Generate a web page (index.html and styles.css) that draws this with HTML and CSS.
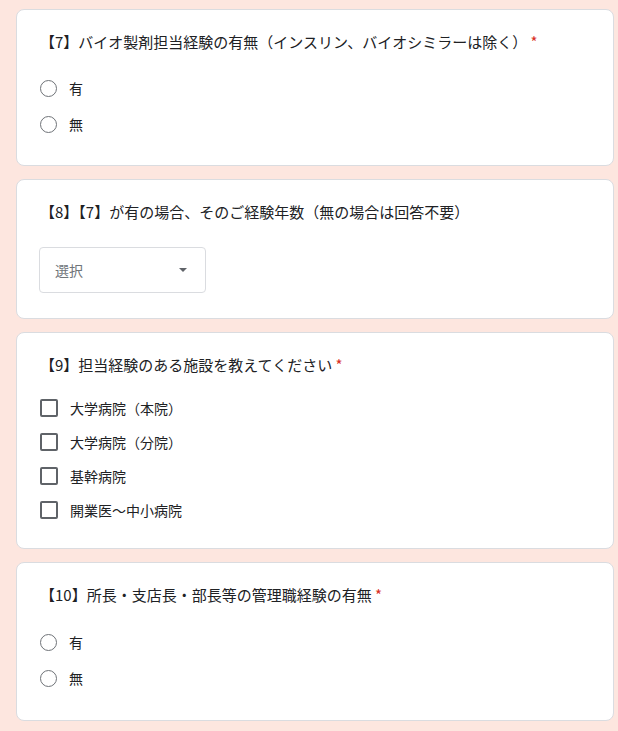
FILE: index.html
```html
<!DOCTYPE html>
<html lang="ja">
<head>
<meta charset="utf-8">
<title>Form</title>
<link rel="stylesheet" href="styles.css">
</head>
<body>
<main class="form">
  <section class="card card-radio">
    <div class="title">【7】バイオ製剤担当経験の有無（インスリン、バイオシミラーは除く） <span class="req">*</span></div>
    <div class="options">
      <label class="opt"><span class="radio"></span><span class="lbl">有</span></label>
      <label class="opt"><span class="radio"></span><span class="lbl">無</span></label>
    </div>
  </section>

  <section class="card card-select">
    <div class="title">【8】【7】が有の場合、そのご経験年数（無の場合は回答不要）</div>
    <div class="select">
      <span class="placeholder">選択</span>
      <span class="arrow"></span>
    </div>
  </section>

  <section class="card card-check">
    <div class="title">【9】担当経験のある施設を教えてください <span class="req">*</span></div>
    <div class="options">
      <label class="opt opt-check"><span class="check"></span><span class="lbl">大学病院（本院）</span></label>
      <label class="opt opt-check"><span class="check"></span><span class="lbl">大学病院（分院）</span></label>
      <label class="opt opt-check"><span class="check"></span><span class="lbl">基幹病院</span></label>
      <label class="opt opt-check"><span class="check"></span><span class="lbl">開業医～中小病院</span></label>
    </div>
  </section>

  <section class="card card-radio card-last">
    <div class="title">【10】所長・支店長・部長等の管理職経験の有無 <span class="req">*</span></div>
    <div class="options">
      <label class="opt"><span class="radio"></span><span class="lbl">有</span></label>
      <label class="opt"><span class="radio"></span><span class="lbl">無</span></label>
    </div>
  </section>
</main>
</body>
</html>
```

FILE: styles.css
```css
html, body {
  margin: 0;
  padding: 0;
}

body {
  background: #fde6df;
  font-family: "Noto Sans CJK JP", "Noto Sans", Roboto, sans-serif;
  color: #202124;
}

.form {
  width: 598px;
  margin: 9px 0 0 16px;
  display: flex;
  flex-direction: column;
  gap: 13px;
  padding-bottom: 10px;
}

.card {
  background: #ffffff;
  border: 1px solid #dadce0;
  border-radius: 8px;
  padding: 21px 23px 23px;
}

.title {
  font-size: 15px;
  line-height: 22px;
}

.req {
  color: #d93025;
}

.options {
  display: flex;
  flex-direction: column;
}

.card-radio .options {
  margin-top: 17px;
}

.card-last .options {
  margin-top: 18px;
}

.card-last {
  padding-bottom: 24px;
}

.opt {
  display: flex;
  align-items: center;
  height: 36px;
  font-size: 14px;
}

.card-check {
  padding-bottom: 21px;
}

.card-check .options {
  margin-top: 15px;
}

.opt-check {
  height: 34px;
}

.radio {
  width: 15px;
  height: 15px;
  border: 1.5px solid #6f7378;
  border-radius: 50%;
  flex: none;
}

.check {
  width: 14px;
  height: 14px;
  border: 2px solid #5f6368;
  border-radius: 2px;
  flex: none;
}

.lbl {
  margin-left: 12px;
}

.card-select {
  padding-bottom: 25px;
}

.select {
  margin-top: 24px;
  margin-left: -1px;
  height: 44px;
  border: 1px solid #dadce0;
  border-radius: 4px;
  display: flex;
  align-items: center;
  justify-content: space-between;
  padding: 0 18px 0 15px;
  box-sizing: content-box;
  width: 132px;
}

.placeholder {
  font-size: 14px;
  color: #70757a;
}

.arrow {
  width: 0;
  height: 0;
  border-left: 4px solid transparent;
  border-right: 4px solid transparent;
  border-top: 4px solid #5f6368;
}
```
